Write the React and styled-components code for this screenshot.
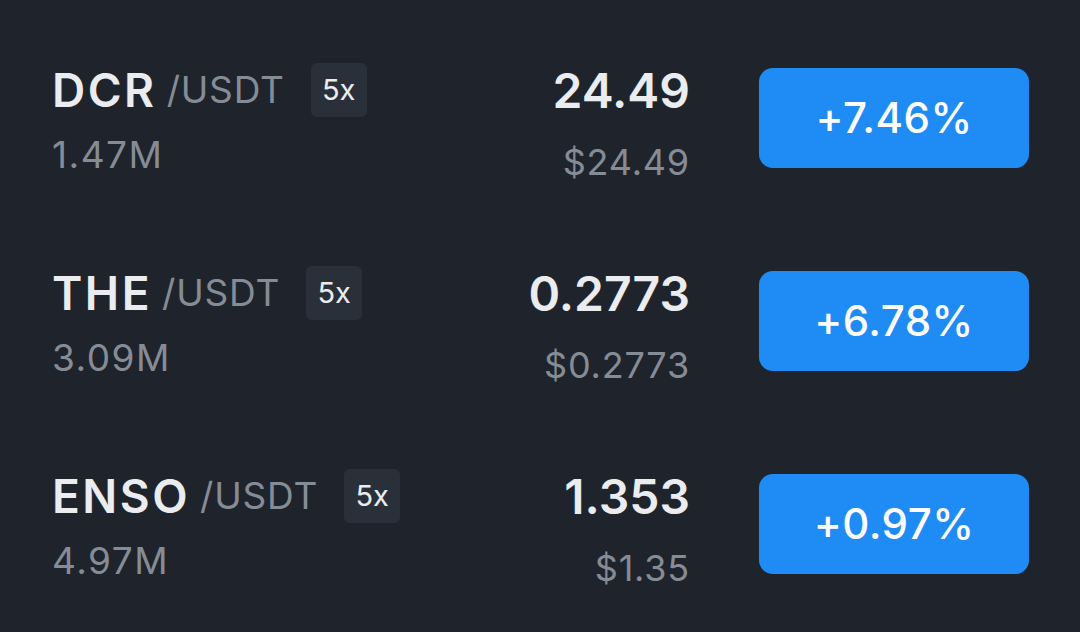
import styled, { createGlobalStyle } from 'styled-components';

const GlobalStyle = createGlobalStyle`
  html, body {
    margin: 0;
    padding: 0;
    background: #1f242c;
  }
  body {
    font-family: Inter, "Liberation Sans", sans-serif;
  }
`;

const Page = styled.div`
  width: 1080px;
  height: 632px;
  box-sizing: border-box;
  padding: 16px 51px 0 52px;
  background: #1f242c;
  overflow: hidden;
`;

const Row = styled.div`
  height: 203px;
  display: flex;
  align-items: center;
`;

const Info = styled.div`
  flex: 1;
  display: flex;
  flex-direction: column;
  gap: 15px;
  margin-top: 3px;
`;

const PairLine = styled.div`
  display: flex;
  align-items: center;
`;

const Symbol = styled.span`
  font-size: 46px;
  font-weight: 600;
  letter-spacing: 2.5px;
  color: #eaecef;
  line-height: 56px;
`;

const Quote = styled.span`
  font-size: 37px;
  letter-spacing: 0.8px;
  color: #868c96;
  margin-left: 10px;
  line-height: 56px;
`;

const Leverage = styled.span`
  margin-left: 26px;
  width: 56px;
  height: 54px;
  border-radius: 6px;
  background: #2a303a;
  color: #eaecef;
  font-size: 29px;
  display: flex;
  align-items: center;
  justify-content: center;
`;

const Volume = styled.div`
  font-size: 37px;
  letter-spacing: 1.5px;
  color: #868c96;
  line-height: 44px;
`;

const PriceCol = styled.div`
  display: flex;
  flex-direction: column;
  align-items: flex-end;
  gap: 21px;
  margin-right: 69px;
  margin-top: 12px;
`;

const Price = styled.div`
  font-size: 48px;
  font-weight: 600;
  color: #eaecef;
  line-height: 56px;
`;

const UsdPrice = styled.div`
  font-size: 36px;
  letter-spacing: 0.8px;
  color: #868c96;
  line-height: 44px;
`;

const ChangeButton = styled.button`
  width: 270px;
  height: 100px;
  border: none;
  border-radius: 14px;
  background: #1f8cf6;
  color: #ffffff;
  font-family: inherit;
  font-size: 42px;
  font-weight: 500;
  letter-spacing: 0.5px;
  cursor: pointer;
`;

const markets = [
  { symbol: 'DCR', volume: '1.47M', price: '24.49', usd: '$24.49', change: '+7.46%' },
  { symbol: 'THE', volume: '3.09M', price: '0.2773', usd: '$0.2773', change: '+6.78%' },
  { symbol: 'ENSO', volume: '4.97M', price: '1.353', usd: '$1.35', change: '+0.97%' },
];

function App() {
  return (
    <>
      <GlobalStyle />
      <Page>
        {markets.map(m => (
          <Row key={m.symbol}>
            <Info>
              <PairLine>
                <Symbol>{m.symbol}</Symbol>
                <Quote>/USDT</Quote>
                <Leverage>5x</Leverage>
              </PairLine>
              <Volume>{m.volume}</Volume>
            </Info>
            <PriceCol>
              <Price>{m.price}</Price>
              <UsdPrice>{m.usd}</UsdPrice>
            </PriceCol>
            <ChangeButton>{m.change}</ChangeButton>
          </Row>
        ))}
      </Page>
    </>
  );
}

export default App;
